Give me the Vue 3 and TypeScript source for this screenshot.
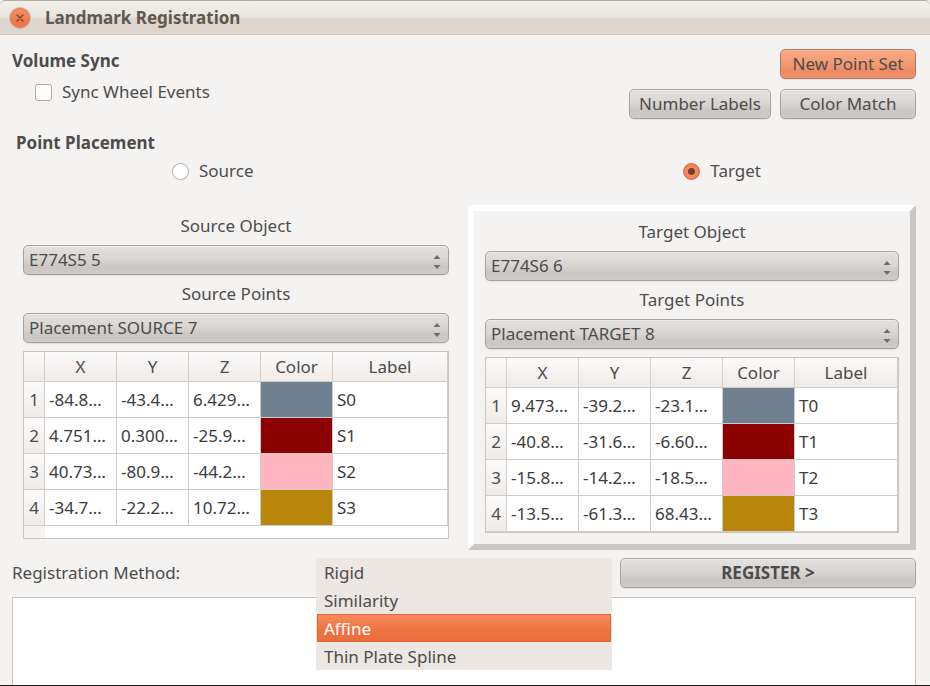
<script setup lang="ts">
import { ref } from 'vue'

interface Landmark {
  x: string
  y: string
  z: string
  color: string
  label: string
}

interface Volume {
  id: string
  kind: string
  object: string
  points: string
  landmarks: Landmark[]
}

const colors = ['#708090', '#8b0000', '#ffb6c1', '#b8860b']

function landmarks(prefix: string, coords: string[][]): Landmark[] {
  return coords.map(([x, y, z], i) => ({ x, y, z, color: colors[i], label: `${prefix}${i}` }))
}

const volumes: Volume[] = [
  {
    id: 'source',
    kind: 'Source',
    object: 'E774S5 5',
    points: 'Placement SOURCE 7',
    landmarks: landmarks('S', [
      ['-84.8…', '-43.4…', '6.429…'],
      ['4.751…', '0.300…', '-25.9…'],
      ['40.73…', '-80.9…', '-44.2…'],
      ['-34.7…', '-22.2…', '10.72…'],
    ]),
  },
  {
    id: 'target',
    kind: 'Target',
    object: 'E774S6 6',
    points: 'Placement TARGET 8',
    landmarks: landmarks('T', [
      ['9.473…', '-39.2…', '-23.1…'],
      ['-40.8…', '-31.6…', '-6.60…'],
      ['-15.8…', '-14.2…', '-18.5…'],
      ['-13.5…', '-61.3…', '68.43…'],
    ]),
  },
]

const methods = ['Rigid', 'Similarity', 'Affine', 'Thin Plate Spline']

const syncWheel = ref(false)
const placement = ref('target')
const method = ref('Affine')
const log = ref('')
</script>

<template>
  <div class="window">
    <header class="titlebar">
      <button class="close" type="button" aria-label="Close">
        <svg viewBox="0 0 20 20" width="20" height="20" aria-hidden="true">
          <path d="M7 7l6 6M13 7l-6 6" fill="none" stroke="#7c4630" stroke-width="1.4" stroke-linecap="round" />
        </svg>
      </button>
      <h1>Landmark Registration</h1>
    </header>

    <main class="body">
      <section class="top">
        <div class="sync">
          <h2>Volume Sync</h2>
          <label class="choice indented">
            <input v-model="syncWheel" type="checkbox" class="check" />
            <span>Sync Wheel Events</span>
          </label>
        </div>
        <div class="actions">
          <button type="button" class="button accent">New Point Set</button>
          <button type="button" class="button">Number Labels</button>
          <button type="button" class="button">Color Match</button>
        </div>
      </section>

      <section class="placement">
        <h2>Point Placement</h2>
        <div class="radios">
          <label v-for="v in volumes" :key="v.id" class="choice">
            <input v-model="placement" type="radio" name="placement" class="radio" :value="v.id" />
            <span>{{ v.kind }}</span>
          </label>
        </div>
      </section>

      <section class="panels">
        <div v-for="v in volumes" :key="v.id" class="panel" :class="{ active: placement === v.id }">
          <label class="caption" :for="`${v.id}-object`">{{ v.kind }} Object</label>
          <div class="combo">
            <select :id="`${v.id}-object`">
              <option>{{ v.object }}</option>
            </select>
            <svg class="arrows" viewBox="0 0 8 16" width="8" height="16" aria-hidden="true">
              <path d="M0.5 5L4 1l3.500 4zM0.500 11h7L4 15z" fill="#6f6c68" />
            </svg>
          </div>
          <label class="caption" :for="`${v.id}-points`">{{ v.kind }} Points</label>
          <div class="combo">
            <select :id="`${v.id}-points`">
              <option>{{ v.points }}</option>
            </select>
            <svg class="arrows" viewBox="0 0 8 16" width="8" height="16" aria-hidden="true">
              <path d="M0.500 5L4 1l3.500 4zM0.500 11h7L4 15z" fill="#6f6c68" />
            </svg>
          </div>
          <div class="grid">
            <table>
              <colgroup>
                <col class="c-index" />
                <col class="c-value" span="4" />
                <col />
              </colgroup>
              <thead>
                <tr>
                  <th></th>
                  <th scope="col">X</th>
                  <th scope="col">Y</th>
                  <th scope="col">Z</th>
                  <th scope="col">Color</th>
                  <th scope="col">Label</th>
                </tr>
              </thead>
              <tbody>
                <tr v-for="(p, i) in v.landmarks" :key="p.label">
                  <th scope="row">{{ i + 1 }}</th>
                  <td>{{ p.x }}</td>
                  <td>{{ p.y }}</td>
                  <td>{{ p.z }}</td>
                  <td :style="{ backgroundColor: p.color }"></td>
                  <td>{{ p.label }}</td>
                </tr>
              </tbody>
            </table>
            <div class="filler"></div>
          </div>
        </div>
      </section>

      <section class="register">
        <label for="method">Registration Method:</label>
        <div class="anchor">
          <select id="method" v-model="method" class="menu" size="4">
            <option v-for="m in methods" :key="m">{{ m }}</option>
          </select>
        </div>
        <button type="button" class="button strong">REGISTER &gt;</button>
      </section>

      <textarea v-model="log" class="log" aria-label="Registration log"></textarea>
    </main>
  </div>
</template>

<style>
body {
  margin: 0;
  background: #f4f3f1;
}
</style>

<style scoped>
.window,
.window * {
  box-sizing: border-box;
}

.window {
  display: flex;
  flex-direction: column;
  min-height: 100vh;
  border-bottom: 1px solid #1c1c1c;
  background: #f5f3f2;
  color: #4c4c4c;
  font-family: 'Noto Sans', 'Open Sans', sans-serif;
  font-size: 17px;
  line-height: 22px;
}

.titlebar {
  display: flex;
  align-items: center;
  gap: 15px;
  height: 35px;
  padding: 0 10px;
  border-top: 1px solid #b9aca2;
  border-bottom: 1px solid #d6cbc3;
  border-radius: 5px 5px 0 0;
  background: linear-gradient(#f0efeb, #eae7e1 46%, #dfd6cf 54%, #ded5cd);
}

h1,
h2 {
  margin: 0;
  font-size: 17px;
  font-weight: 700;
}

h1 {
  color: #5f5750;
}

button,
select,
textarea {
  color: inherit;
  font: inherit;
}

.close {
  display: grid;
  width: 20px;
  height: 20px;
  padding: 0;
  border: 0;
  border-radius: 50%;
  background: linear-gradient(#f68f67, #f0703f);
  box-shadow: inset 0 0 0 1px #d98364, 0 0 0 1px #e0b9a8;
}

.body {
  display: flex;
  flex: 1;
  flex-direction: column;
  padding: 14px 14px 0 12px;
}

.top {
  display: flex;
  justify-content: space-between;
}

.sync {
  display: flex;
  flex-direction: column;
  gap: 9px;
  padding-top: 1px;
}

.choice {
  display: flex;
  align-items: center;
  gap: 10px;
}

.indented {
  padding-left: 23px;
}

.check,
.radio {
  width: 17px;
  height: 17px;
  margin: 0;
  border: 1px solid #b5aaa2;
  background: #fff;
  appearance: none;
}

.check {
  border-radius: 3px;
}

.check:checked {
  background: #f0773f;
}

.radio {
  border-radius: 50%;
}

.radio:checked {
  border-color: #d2694a;
  background: radial-gradient(circle, #71402e 3px, #f58a60 4px, #f07746);
}

.actions {
  display: grid;
  grid-template-columns: 142px 136px;
  gap: 10px 9px;
}

.button {
  height: 30px;
  padding: 0 8px;
  border: 1px solid #aaa49f;
  border-radius: 5px;
  background: linear-gradient(#e4e2e0, #d7d4d1 50%, #cbc6c3 75%, #cfcbc8);
  box-shadow: inset 0 1px 0 #efedeb, 0 1px 1px #e2dfdc;
  line-height: 22px;
  white-space: nowrap;
}

.accent {
  grid-column: 2;
  border-color: #b07a66;
  background: linear-gradient(#faa986, #f39a74 50%, #ed8b63 75%, #ef936d);
  box-shadow: inset 0 1px 0 #fbb697, 0 1px 1px #e2dfdc;
}

.strong {
  font-weight: 700;
}

.placement {
  display: flex;
  flex-direction: column;
  gap: 6px;
  padding: 13px 0 23px 4px;
}

.radios {
  display: flex;
  justify-content: space-between;
  padding: 0 155px 0 156px;
}

.panels {
  display: grid;
  grid-template-columns: 1fr 1fr;
  gap: 8px;
}

.panel {
  display: flex;
  flex-direction: column;
  gap: 8px;
  min-width: 0;
  padding: 10px 11px 11px;
}

.active {
  border: 6px solid;
  border-color: #fff #c9c8c6 #c9c8c6 #fff;
}

.caption {
  text-align: center;
}

.combo {
  position: relative;
  display: flex;
}

.combo select {
  flex: 1;
  height: 30px;
  padding: 0 24px 0 5px;
  border: 1px solid #aaa49f;
  border-radius: 5px;
  background: linear-gradient(#e4e2e0, #d7d4d1 50%, #cbc6c3 75%, #cfcbc8);
  box-shadow: inset 0 1px 0 #efedeb, 0 1px 1px #e2dfdc;
  appearance: none;
}

.arrows {
  position: absolute;
  top: 9px;
  right: 8px;
  pointer-events: none;
}

.grid {
  display: flex;
  flex: 1;
  flex-direction: column;
  border: 1px solid #cdc3bb;
  background: #fff;
}

table {
  width: 100%;
  table-layout: fixed;
  border-spacing: 0;
}

.c-index {
  width: 21px;
}

.c-value {
  width: 72px;
}

th,
td {
  height: 36px;
  padding: 0;
  border-right: 1px solid #cfcdcb;
  border-bottom: 1px solid #cfcdcb;
}

th {
  border-color: #d5ccc5;
  background: linear-gradient(#fcfbfb, #efebe8);
  font-weight: 400;
  text-align: center;
}

thead th {
  height: 30px;
}

td {
  padding-left: 4px;
  overflow: hidden;
  color: #3c3c3c;
  white-space: nowrap;
}

.filler {
  flex: 1;
  width: 21px;
  background: #f5f3f2;
}

.register {
  display: grid;
  grid-template-columns: 296fr 296fr 296fr;
  align-items: center;
  gap: 8px;
  padding: 8px 0 9px;
}

.anchor {
  position: relative;
  align-self: stretch;
}

.menu {
  position: absolute;
  top: 0;
  left: 0;
  z-index: 1;
  width: 100%;
  height: 112px;
  padding: 0 1px;
  overflow: hidden;
  border: 0;
  border-radius: 0;
  outline: 0;
  background: #ece7e3;
}

.menu option {
  height: 28px;
  min-height: 28px;
  padding: 3px 7px 2px;
}

.menu option:checked {
  background-image: linear-gradient(#fb8c60, #ee7443 55%, #ea6d3b);
  box-shadow: inset 0 0 0 1px #df6737;
  -webkit-text-fill-color: #fff;
}

.log {
  flex: 1;
  width: 100%;
  min-height: 88px;
  padding: 8px;
  border: 1px solid #cdc3bb;
  border-bottom: 0;
  outline: 0;
  background: #fff;
  resize: none;
}
</style>
